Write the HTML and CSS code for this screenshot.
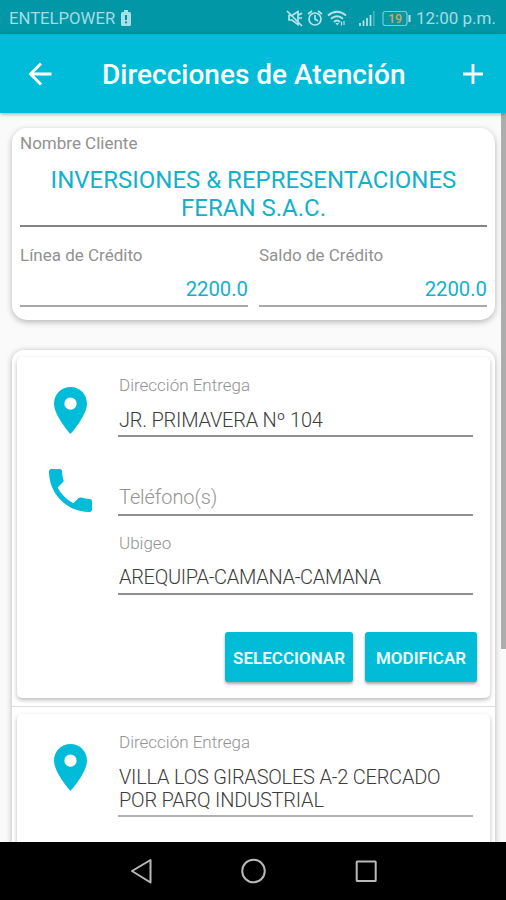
FILE: index.html
```html
<!DOCTYPE html>
<html lang="es">
<head>
<meta charset="utf-8">
<title>Direcciones de Atención</title>
<link rel="stylesheet" href="styles.css">
</head>
<body>
<div class="screen">
  <div class="status">
    <span class="carrier">ENTELPOWER</span>
    <svg class="carrier-battery" width="10" height="16" viewBox="0 0 10 16"><path fill="#a9dfe6" d="M3 0h4v2h1.500q1.500 0 1.500 1.500v11q0 1.500-1.500 1.500h-7q-1.500 0-1.500-1.500v-11q0-1.500 1.500-1.500h1.500z"/><path fill="#0b8c9b" d="M4 5h2v5h-2zM4 11.500h2v1.700h-2z"/></svg>
    <svg class="status-icons" width="126" height="20" viewBox="285 7 126 20" fill="none" stroke="#b5e4ea" stroke-width="1.700">
      <path d="M289 14.500h3l6-4v13l-6-4.500h-3zM287 10l15 15M299 14l3-2M299 17h3"/>
      <circle cx="315" cy="18" r="6"/><path d="M315 14v4l3 2M308 13l4-3M322 13l-4-3"/>
      <path d="M328 14.500q9-7.500 18 0M331 17.800q6-5 12 0M334 21q3-3 6 0" stroke-width="2"/><path d="M335.500 22h3.500l-1.750 2.500z" fill="#b5e4ea" stroke="none"/><path d="M341.500 20.500v4M344 20v4" stroke-width="1.200"/>
      <path d="M360 25v-3M363.500 25v-5.500M367 25v-8M370.500 25v-11" stroke-width="1.700"/><path d="M373.800 25v-15" stroke="#4fb4c0" stroke-width="1.500"/>
      <rect x="383" y="10.500" width="24" height="14" rx="2.500" stroke="#83c7cf" stroke-width="1.200"/><path d="M409.500 14v7" stroke-width="2"/>
      <text class="battery-level" x="388" y="22.200">19</text>
    </svg>
    <span class="clock">12:00 p.m.</span>
  </div>
  <header class="appbar">
    <svg class="back" width="24" height="24" viewBox="0 0 24 24" fill="none" stroke="#fff" stroke-width="2.900"><path d="M23.500 12H3M13 1.500L2.500 12L13 22.500"/></svg>
    <h1>Direcciones de Atención</h1>
    <svg class="add" width="22" height="22" viewBox="0 0 22 22" stroke="#fff" stroke-width="2.800"><path d="M11 1v20M1 11h20"/></svg>
  </header>
  <main class="content">
    <section class="client">
      <div class="client-label name-label">Nombre Cliente</div>
      <div class="client-name"><span>INVERSIONES &amp; REPRESENTACIONES</span><br><span class="name-rest">FERAN S.A.C.</span></div>
      <div class="credits">
        <div class="credit"><div class="client-label">Línea de Crédito</div><div class="amount">2200.0</div></div>
        <div class="credit"><div class="client-label">Saldo de Crédito</div><div class="amount">2200.0</div></div>
      </div>
    </section>
    <section class="addresses">
      <article class="address">
        <div class="symbols">
          <svg class="pin" width="33" height="47" viewBox="5 2 14 20" preserveAspectRatio="none" fill="#00bcd8"><path d="M12 2C8.130 2 5 5.130 5 9c0 5.250 7 13 7 13s7-7.750 7-13c0-3.870-3.130-7-7-7zm0 9.700a2.600 2.600 0 0 1 0-5.200 2.600 2.600 0 0 1 0 5.200z"/></svg>
          <svg class="phone" width="43" height="43" viewBox="3 3 18 18" fill="#00bcd8"><path d="M6.620 10.790c1.440 2.830 3.760 5.140 6.590 6.590l2.200-2.200c.27-.27.67-.36 1.020-.24 1.120.37 2.330.57 3.570.57.55 0 1 .45 1 1V20c0 .55-.45 1-1 1-9.390 0-17-7.610-17-17 0-.55.45-1 1-1h3.500c.55 0 1 .45 1 1 0 1.250.2 2.450.57 3.570.11.35.03.74-.25 1.020l-2.200 2.200z"/></svg>
        </div>
        <div class="fields">
          <div class="label">Dirección Entrega</div>
          <div class="value first">JR. PRIMAVERA Nº 104</div>
          <div class="placeholder">Teléfono(s)</div>
          <div class="label district">Ubigeo</div>
          <div class="value last">AREQUIPA-CAMANA-CAMANA</div>
        </div>
        <div class="actions"><button class="select">SELECCIONAR</button><button class="modify">MODIFICAR</button></div>
      </article>
      <div class="divider"></div>
      <article class="address">
        <div class="symbols">
          <svg class="pin" width="33" height="47" viewBox="5 2 14 20" preserveAspectRatio="none" fill="#00bcd8"><path d="M12 2C8.130 2 5 5.130 5 9c0 5.250 7 13 7 13s7-7.750 7-13c0-3.870-3.130-7-7-7zm0 9.700a2.600 2.600 0 0 1 0-5.200 2.600 2.600 0 0 1 0 5.200z"/></svg>
        </div>
        <div class="fields">
          <div class="label">Dirección Entrega</div>
          <div class="value long"><span>VILLA LOS GIRASOLES A-2 CERCADO</span><br>POR PARQ INDUSTRIAL</div>
        </div>
      </article>
    </section>
    <div class="scrollbar"></div>
  </main>
  <nav class="navbar">
    <svg width="506" height="58" viewBox="0 842 506 58" fill="none" stroke="#b9b9b9" stroke-width="2"><path d="M150.500 860v22.500L132 871z" stroke-linejoin="round"/><circle cx="253.500" cy="871" r="11.300"/><rect x="356.700" y="861.500" width="19" height="19.500" rx=".5"/></svg>
  </nav>
</div>
</body>
</html>
```
FILE: styles.css
```css
* { box-sizing: border-box; }
body { margin: 0; font-family: Roboto, "Liberation Sans", sans-serif; }
.screen { width: 506px; height: 900px; display: flex; flex-direction: column; overflow: hidden; background: #fafafa; }
.status { height: 34px; flex: none; display: flex; align-items: center; background: #0297a7; color: #a5dce3; padding: 2px 0 0 9px; }
.carrier { font-size: 16.700px; width: 107px; white-space: nowrap; }
.carrier-battery { margin-left: 5px; }
.status-icons { margin-left: 154px; flex: none; }
.battery-level { font-size: 12.500px; font-weight: 500; fill: #d6a35c; stroke: none; }
.clock { margin-left: 5px; font-size: 17px; white-space: nowrap; }
.appbar { height: 79px; flex: none; display: flex; align-items: center; padding: 0 22px 0 28px; background: #00bcd9; box-shadow: 0 1px 4px rgba(0,0,0,.35); position: relative; z-index: 1; }
.back { margin-top: 1px; }
.add { margin: 1px 0 0 auto; }
h1 { margin: 3px 0 0 50px; color: #fff; font-size: 28px; line-height: 34px; font-weight: 500; white-space: nowrap; }
.content { flex: 1; min-height: 0; overflow: hidden; padding: 15px 11px 0 12px; position: relative; }
.client { height: 192px; padding: 5px 8px 0; border-radius: 15px; background: #fff; box-shadow: 0 2px 6px rgba(0,0,0,.28); }
.client-label { font-size: 17px; line-height: 20px; color: #919191; }
.client-name { height: 74px; padding-top: 13px; border-bottom: 2px solid #858585; color: #12b1cb; text-align: center; font-size: 24px; line-height: 28px; white-space: nowrap; }
.credits { display: flex; gap: 11px; padding-top: 18px; }
.credit { flex: 1; }
.amount { height: 42px; padding-top: 12px; text-align: right; color: #12b1cb; font-size: 20.300px; line-height: 24px; border-bottom: 2px solid #a9a9a9; }
.addresses { margin-top: 30px; height: 520px; padding: 7px 5px 0; border-radius: 12px 12px 0 0; background: #fff; box-shadow: 0 1px 6px rgba(0,0,0,.28); }
.address { display: grid; grid-template-columns: 101px 355px; grid-template-rows: auto auto; align-content: start; background: #fff; height: 341px; border-radius: 5px; box-shadow: 0 2px 4px rgba(0,0,0,.28); }
.symbols { padding-top: 30px; display: flex; flex-direction: column; align-items: center; padding-left: 6px; }
.pin, .phone { display: block; flex: none; }
.phone { margin-top: 35px; }
.fields { padding-top: 18px; }
.label { font-size: 17px; line-height: 20px; font-weight: 300; color: #929292; padding-left: 1px; }
.value, .placeholder { font-size: 20px; line-height: 23px; font-weight: 300; color: #3c3c3c; border-bottom: 2px solid #909090; white-space: nowrap; padding-left: 1px; letter-spacing: -.22px; }
.first { height: 42px; padding-top: 14px; }
.placeholder { height: 79px; padding-top: 49px; color: #939393; letter-spacing: -.1px; }
.district { margin-top: 17px; }
.last { height: 42px; padding-top: 13px; letter-spacing: -.3px; }
.long { height: 65px; padding-top: 14px; border-color: #b0b0b0; }
.actions { grid-column: 1 / 3; display: flex; gap: 12px; justify-content: flex-end; padding-top: 37px; margin-right: -4px; }
button { height: 50px; border: 0; border-radius: 3px; padding: 2px 0 0; background: #00bcd6; color: #eefdff; font: 600 17px Roboto, sans-serif; box-shadow: 0 2px 3px rgba(0,0,0,.35); }
.select { width: 128px; }
.modify { width: 112px; }
.divider { height: 1px; margin: 8px -5px 7px; background: #ddd; }
.scrollbar { position: absolute; top: 0; right: 0; width: 5px; height: 536px; background: #adadad; }
.navbar { height: 58px; flex: none; background: #000; position: relative; }
.navbar svg { display: block; }
```
